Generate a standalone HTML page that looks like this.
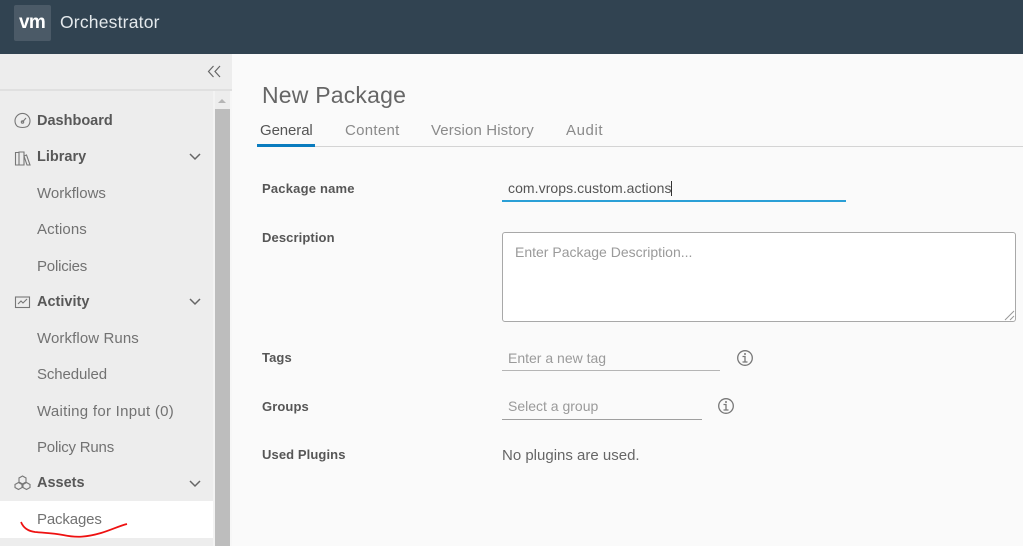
<!DOCTYPE html>
<html><head><meta charset="utf-8"><style>
html,body{margin:0;padding:0}
body{width:1023px;height:546px;overflow:hidden;position:relative;background:#fafafa;font-family:"Liberation Sans",sans-serif;color:#666}
.a{position:absolute;white-space:nowrap}
.t{line-height:18px;height:18px}
.n{font-size:15px;color:#727272;left:37px}
.h{font-size:14.5px;font-weight:bold;color:#585858;left:37px}
.l{font-size:13px;font-weight:bold;color:#565656;left:262px;letter-spacing:.1px}
.tab{font-size:15px;color:#8a8a8a;top:122px}
.ph{font-size:14px;color:#9a9a9a}
svg{position:absolute;overflow:visible}
</style></head><body>
<div class="a" style="left:0;top:0;width:1023px;height:54px;background:#314351"></div>
<div class="a" style="left:14px;top:5px;width:37px;height:36px;background:#4b5a67;border-radius:2px"></div>
<div class="a t" style="left:19px;top:14px;font-size:19px;font-weight:bold;color:#fff;letter-spacing:-.7px">vm</div>
<div class="a t" style="left:60px;top:13px;font-size:17.500px;color:#e4e9ec;letter-spacing:.2px">Orchestrator</div>

<div class="a" style="left:0;top:54px;width:232px;height:492px;background:#ededed"></div>
<div class="a" style="left:0;top:89px;width:232px;height:2px;background:#e0e0e0"></div>
<div class="a" style="left:215px;top:109px;width:15px;height:437px;background:#bdbdbd"></div>
<div class="a" style="left:230px;top:91px;width:2px;height:455px;background:#f7f7f7"></div>
<div class="a" style="left:213px;top:91px;width:2px;height:455px;background:#f3f3f3"></div>
<div class="a" style="left:215px;top:91px;width:15px;height:18px;background:#ededed"></div>
<svg style="left:0;top:0" width="232" height="546">
<path d="M218 103l4-4 4 4z" fill="#b5b5b5"/>
<path d="M213.500 66l-5 5.500 5 5.500M220 66l-5 5.500 5 5.500" fill="none" stroke="#666" stroke-width="1.200"/>
<g fill="none" stroke="#777" stroke-width="1.100">
<path d="M17.500 126.500a7.500 7.500 0 1 1 10 0q-5 2-10 0zM22.500 122l3.500-4"/>
<circle cx="22.500" cy="122" r="1.200"/>
<path d="M15.500 152.500h3.500v12.500h-3.500zM19 152h5v13h-5zM24 156l2.500-1 3.500 10h-3z"/>
<rect x="15.500" y="297" width="14" height="10.500"/><path d="M18 304l3-3 2 2 4-4"/>
<path d="M22.500 476l3.500 2v4l-3.500 2-3.500-2v-4zM18.500 482.500l3.500 2v3l-3.500 2-3.500-2v-3zM26.500 482.500l3.500 2v3l-3.500 2-3.500-2v-3z"/>
</g>
<path d="M190 154l5 5 5-5M190 299l5 5 5-5M190 481l5 5 5-5" fill="none" stroke="#666" stroke-width="1.500"/>
</svg>
<div class="a t h" style="top:112px">Dashboard</div>
<div class="a t h" style="top:148px">Library</div>
<div class="a t n" style="top:185px">Workflows</div>
<div class="a t n" style="top:221px;letter-spacing:.1px">Actions</div>
<div class="a t n" style="top:258px;letter-spacing:-.2px">Policies</div>
<div class="a t h" style="top:293px">Activity</div>
<div class="a t n" style="top:330px;letter-spacing:.1px">Workflow Runs</div>
<div class="a t n" style="top:366px;letter-spacing:-.1px">Scheduled</div>
<div class="a t n" style="top:403px;letter-spacing:.28px">Waiting for Input (0)</div>
<div class="a t n" style="top:439px;letter-spacing:-.2px">Policy Runs</div>
<div class="a t h" style="top:474px">Assets</div>
<div class="a" style="left:0;top:501px;width:213px;height:37px;background:#fff"></div>
<div class="a t n" style="top:511px;letter-spacing:-.15px">Packages</div>
<svg style="left:0;top:0;pointer-events:none" width="232" height="546"><path d="M21 522c2 5 6 9 14 10 10 1 18 1 28 3 14 3 24 2 38-2 10-3 18-7 26-9" fill="none" stroke="#ee1111" stroke-width="1.700"/></svg>

<div class="a" style="left:262px;top:82px;font-size:23px;line-height:26px;color:#666;letter-spacing:.2px">New Package</div>
<div class="a t tab" style="left:260px;color:#555;letter-spacing:-.1px">General</div>
<div class="a t tab" style="left:345px;letter-spacing:.3px">Content</div>
<div class="a t tab" style="left:431px;letter-spacing:.13px">Version History</div>
<div class="a t tab" style="left:566px;letter-spacing:.6px">Audit</div>
<div class="a" style="left:257px;top:146px;width:766px;height:1px;background:#d4d4d4"></div>
<div class="a" style="left:257px;top:144px;width:58px;height:3px;background:#0a7cbf"></div>

<div class="a t l" style="top:180px;letter-spacing:.2px">Package name</div>
<div class="a t l" style="top:229px">Description</div>
<div class="a t l" style="top:349px">Tags</div>
<div class="a t l" style="top:398px">Groups</div>
<div class="a t l" style="top:446px">Used Plugins</div>

<div class="a t" style="left:508px;top:179px;font-size:14px;color:#555;letter-spacing:.07px">com.vrops.custom.actions</div>
<div class="a" style="left:671px;top:181px;width:1px;height:15px;background:#333"></div>
<div class="a" style="left:502px;top:200px;width:344px;height:2px;background:#2a9fd6"></div>

<div class="a" style="left:502px;top:232px;width:512px;height:88px;background:#fff;border:1px solid #a8a8a8;border-radius:3px"></div>
<div class="a t ph" style="left:515px;top:243px">Enter Package Description...</div>
<svg style="left:1004px;top:310px" width="12" height="11"><path d="M1 10l9-9M6 10l4-4" stroke="#999" stroke-width="1"/></svg>

<div class="a t ph" style="left:508px;top:349px">Enter a new tag</div>
<div class="a" style="left:502px;top:370px;width:218px;height:1px;background:#b5b5b5"></div>
<div class="a t ph" style="left:508px;top:397px">Select a group</div>
<div class="a" style="left:502px;top:419px;width:200px;height:1px;background:#9f9f9f"></div>

<svg style="left:0;top:0" width="1023" height="546">
<g fill="none" stroke="#777" stroke-width="1.300">
<circle cx="745" cy="358" r="7.300"/><path d="M742.500 356.500h2.500v5.500M742.500 362h5"/>
<circle cx="726" cy="406" r="7.300"/><path d="M723.500 404.500h2.500v5.500M723.500 410h5"/>
</g>
<circle cx="745" cy="354" r="1" fill="#777"/><circle cx="726" cy="402" r="1" fill="#777"/>
</svg>
<div class="a t" style="left:502px;top:447px;font-size:15px;color:#666">No plugins are used.</div>
</body></html>
